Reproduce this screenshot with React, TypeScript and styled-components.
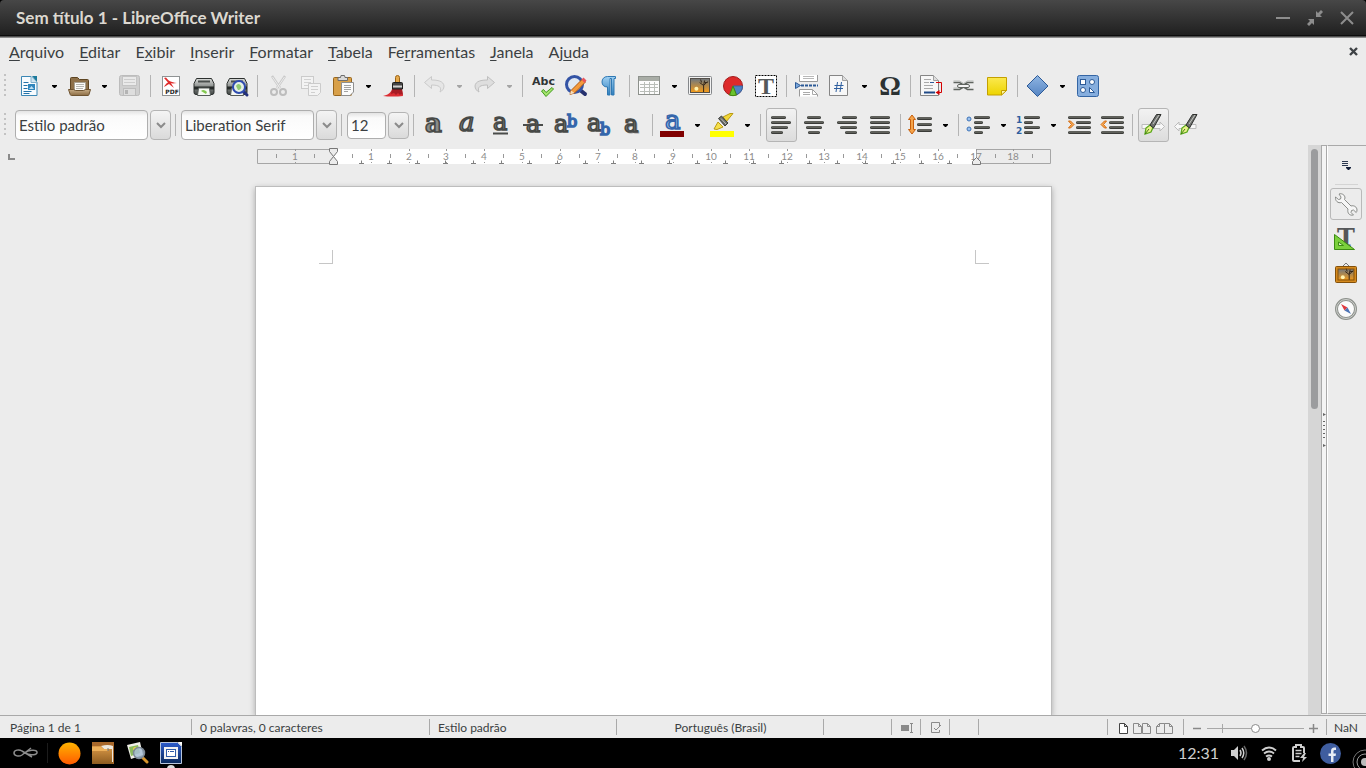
import React from "react";
import styled, { createGlobalStyle, css } from "styled-components";

const GlobalStyle = createGlobalStyle`
  *, *::before, *::after { box-sizing: border-box; }
  html, body { margin: 0; padding: 0; background: #000; }
  body { font-family: Lato, "Liberation Sans", sans-serif; color: #3b3f42; }
  button, input { font: inherit; color: inherit; margin: 0; padding: 0; border: 0; background: none; }
`;

const line = "#a9a9a9";

const Shell = styled.div`
  display: flex;
  flex-direction: column;
  height: 100vh;
  overflow: hidden;
  background: #ececec;
`;

/* ---------- window frame ---------- */

const TitleBackdrop = styled.div`
  background: #000;
`;

const TitleBar = styled.header`
  display: flex;
  align-items: center;
  justify-content: space-between;
  height: 38px;
  padding: 0 11px 2px 16px;
  border-radius: 4px 4px 0 0;
  background: linear-gradient(#474747, #202020 35px, #0c0c0c 35px, #0c0c0c 36px, #8f8f8f 37px);
`;

const Title = styled.h1`
  margin: 0;
  font-size: 17px;
  line-height: 20px;
  font-weight: 700;
  color: #dcd8d0;
`;

const WindowButtons = styled.div`
  display: flex;
  gap: 16px;
`;

const WindowButton = styled.button`
  width: 16px;
  height: 16px;
  color: #8d8d8d;
  svg { display: block; }
`;

const MenuBar = styled.nav`
  display: flex;
  align-items: center;
  gap: 15px;
  height: 29px;
  padding: 0 8px 2px 9px;
  font-size: 16px;
  line-height: 20px;
`;

const MenuLink = styled.a`
  color: inherit;
  text-decoration: none;
  u { text-decoration-thickness: 1px; text-underline-offset: 2px; }
`;

const CloseDocument = styled.button`
  width: 9px;
  height: 9px;
  margin-left: auto;
  svg { display: block; }
`;

/* ---------- toolbars ---------- */

const Toolbar = styled.div<{ $tall?: boolean }>`
  display: flex;
  align-items: center;
  height: ${(p) => (p.$tall ? 40 : 38)}px;
`;

const Grip = styled.span<{ $wide?: boolean }>`
  width: 2px;
  height: 24px;
  margin: 0 ${(p) => (p.$wide ? 9 : 7)}px 0 4px;
  background: repeating-linear-gradient(#c2c2c2 0 2px, transparent 2px 5px);
`;

const ToolButton = styled.button<{ $pressed?: boolean }>`
  flex: none;
  width: 33px;
  height: 34px;
  padding: 0 4px 0 5px;
  svg { display: block; overflow: visible; }
  ${(p) =>
    p.$pressed &&
    css`
      width: 31px;
      margin-left: 2px;
      padding: 0 3px 0 2px;
      border: 1px solid #b5b5b5;
      border-radius: 3px;
      background: linear-gradient(#f2f2f2, #dcdcdc);
    `}
`;

const ArrowButton = styled.button`
  flex: none;
  width: 17px;
  height: 34px;
  padding: 0 6px;
  svg { display: block; }
`;

const Separator = styled.span`
  flex: none;
  width: 1px;
  height: 22px;
  margin: 0 3px 0 4px;
  background: #b4b4b4;
`;

const ComboSeparator = styled(Separator)`
  margin-right: 5px;
`;

const Combo = styled.div`
  display: flex;
  align-items: center;
  gap: 2px;
`;

const ComboInput = styled.input<{ $small?: boolean }>`
  width: ${(p) => (p.$small ? 39 : 133)}px;
  height: ${(p) => (p.$small ? 27 : 30)}px;
  padding: 0 3px;
  border: 1px solid #aeaeae;
  border-radius: 4px;
  background: linear-gradient(#e4e4e4, #fafafa 5px, #fff);
  font-size: 15px;
  line-height: 20px;
`;

const ComboButton = styled.button<{ $small?: boolean }>`
  display: flex;
  align-items: center;
  justify-content: center;
  width: 21px;
  height: ${(p) => (p.$small ? 27 : 30)}px;
  border: 1px solid #b4b4b4;
  border-radius: 4px;
  background: linear-gradient(#f4f4f4, #dadada);
`;

/* ---------- document area ---------- */

const Workspace = styled.div`
  display: flex;
  flex: 1;
  min-height: 0;
`;

const DocumentArea = styled.main`
  display: flex;
  flex: 1;
  flex-direction: column;
  align-items: center;
  min-width: 0;
  overflow: hidden;
`;

const RulerRow = styled.div`
  display: grid;
  grid-template-columns: 1fr 794px 1fr;
  width: 100%;
  padding-top: 3px;
  svg { display: block; overflow: visible; }
`;

const TabSelector = styled.button`
  width: 7px;
  height: 6px;
  margin: 6px 0 0 8px;
  border-left: 2px solid #8a8a8a;
  border-bottom: 2px solid #8a8a8a;
`;

const Page = styled.article`
  display: flex;
  flex: 1;
  justify-content: space-between;
  align-items: flex-start;
  width: 797px;
  margin: 21px 1px 0 0;
  padding: 63px 62px 0 63px;
  border: 1px solid #bdbdbd;
  border-bottom: 0;
  background: #fff;
  box-shadow: 0 2px 6px rgba(0, 0, 0, 0.28);
`;

const MarginCorner = styled.span<{ $side: "left" | "right" }>`
  width: 14px;
  height: 14px;
  border-bottom: 1px solid #c6c6c6;
  border-${(p) => (p.$side === "left" ? "right" : "left")}: 1px solid #c6c6c6;
`;

const ScrollTrack = styled.div`
  width: 13px;
  padding: 4px 3px 0;
  background: #d6d6d6;
`;

const ScrollThumb = styled.div`
  width: 7px;
  height: 46%;
  border-radius: 4px;
  background: #9b9c9e;
`;

const Splitter = styled.div`
  display: flex;
  align-items: center;
  justify-content: center;
  width: 6px;
  margin-bottom: 1px;
  border: 1px solid ${line};
  background: #f4f4f4;
`;

const Sidebar = styled.aside`
  display: flex;
  flex-direction: column;
  align-items: center;
  gap: 3px;
  width: 39px;
  margin-bottom: 1px;
  padding: 11px 2px 0 0;
  border-top: 1px solid ${line};
  border-bottom: 1px solid ${line};
  border-left: 1px solid #fff;
`;

const SidebarMenu = styled.button`
  width: 16px;
  height: 16px;
  svg { display: block; }
`;

const SidebarRule = styled.span`
  width: 23px;
  height: 1px;
  margin-top: 8px;
  background: #d4d4d4;
`;

const SidebarButton = styled.button<{ $pressed?: boolean }>`
  display: flex;
  align-items: center;
  justify-content: center;
  width: 32px;
  height: 32px;
  border: 1px solid ${(p) => (p.$pressed ? "#b9b9b9" : "transparent")};
  border-radius: 3px;
  svg { overflow: visible; }
`;

/* ---------- status bar ---------- */

const StatusBar = styled.footer`
  display: grid;
  grid-template-columns: 192px 238px 187px 207px 68px 29px 29px 29px 1fr 76px 143px 39px;
  height: 23px;
  border-top: 1px solid ${line};
  font-size: 12px;
  line-height: 20px;
`;

const StatusCell = styled.div<{ $center?: boolean; $last?: boolean }>`
  display: flex;
  align-items: center;
  justify-content: ${(p) => (p.$center ? "center" : "flex-start")};
  gap: 5px;
  padding: 2px 0 0 ${(p) => (p.$center ? 0 : p.$last ? 7 : 8)}px;
  white-space: nowrap;
  background: ${(p) => (p.$last ? "none" : `linear-gradient(${line}, ${line}) right 3px / 1px 16px no-repeat`)};
  svg { display: block; }
`;

const FirstStatusCell = styled(StatusCell)`
  padding-left: 10px;
`;

const IconButton = styled.button`
  svg { display: block; }
`;

const ZoomSlider = styled.input`
  appearance: none;
  width: 97px;
  height: 9px;
  background:
    linear-gradient(#a8a8a8, #a8a8a8) 15px 0 / 1px 9px no-repeat,
    linear-gradient(#a8a8a8, #a8a8a8) 0 4px / 100% 1px no-repeat;
  &::-webkit-slider-thumb {
    appearance: none;
    width: 9px;
    height: 9px;
    border: 1px solid #8a8a8a;
    border-radius: 50%;
    background: #fff;
  }
`;

/* ---------- desktop panel ---------- */

const Taskbar = styled.footer`
  display: flex;
  align-items: center;
  height: 30px;
  padding: 0 0 0 13px;
  overflow: hidden;
  background: #000;
  color: #cfcfcf;
  svg { display: block; overflow: visible; }
`;

const Launchers = styled.div`
  display: flex;
  align-items: center;
  gap: 10px;
`;

const PanelRule = styled.span`
  width: 1px;
  height: 20px;
  background: #1c1c1c;
`;

const Tray = styled.div`
  display: flex;
  align-items: center;
  gap: 12px;
  margin-left: auto;
`;

const Clock = styled.time`
  font-size: 16px;
  line-height: 20px;
`;

/* ---------- icons ---------- */

type Kids = { children: React.ReactNode };
const I24 = ({ children }: Kids) => (
  <svg width="24" height="24" viewBox="0 0 24 24" aria-hidden="true">
    {children}
  </svg>
);

const Grad = ({ id, a, b }: { id: string; a: string; b: string }) => (
  <linearGradient id={id} x1="0" y1="0" x2="0" y2="1">
    <stop offset="0" stopColor={a} />
    <stop offset="1" stopColor={b} />
  </linearGradient>
);

const NewIcon = () => (
  <I24>
    <path d="M3.5 2.5H13l6 6V21.5H3.5z" fill="#f7fbfe" stroke="#3b87b5" />
    <path d="M14 2h5v6z" fill="#1c7a9c" />
    <path d="M13 2.5V8.5H19" fill="#cfe5f2" stroke="#7fb0cc" />
    <path d="M5.5 8.5h5M5.5 11.5h4M5.5 14.5h4M5.5 17.5h8M5.5 19.5h6" stroke="#2372a8" />
    <path d="M10 10h7v6h-7z" fill="#2f86bd" />
    <path d="M11 15l2.500-3 2.500 3z" fill="#bfe0f2" />
  </I24>
);

const OpenIcon = () => (
  <I24>
    <defs><Grad id="openFront" a="#c8ad87" b="#8a6b43" /></defs>
    <path d="M2.5 17V4.5q0-1 1-1h6l2 2h8q1 0 1 1V17z" fill="#8d7049" stroke="#5d4523" />
    <path d="M6.500 8.500h11V17h-11z" fill="#fbfbf8" stroke="#a8a294" />
    <path d="M8 10.500h8M8 12.500h8M8 14.500h7" stroke="#b5b5b0" />
    <path d="M.5 15.500h5l2 1h8l2-1h5L21 20.500q-.3 1-1 1H3.500q-1 0-1.300-1z" fill="url(#openFront)" stroke="#6e5330" />
  </I24>
);

const SaveIcon = () => (
  <I24>
    <rect x="1.500" y="1.500" width="20" height="20" rx="2" fill="#cfcfcf" stroke="#bcbcbc" />
    <rect x="4.500" y="2.500" width="14" height="9" fill="#e9e9e9" stroke="#c4c4c4" />
    <path d="M6 5.500h11M6 8.500h11" stroke="#cdcdcd" />
    <rect x="5.500" y="14.500" width="12" height="7" fill="#dedede" stroke="#bdbdbd" />
    <rect x="7" y="16" width="3" height="4" fill="#b4b4b4" />
  </I24>
);

const PdfIcon = () => (
  <I24>
    <rect x="3.500" y="2.500" width="17" height="19" fill="#fff" stroke="#8f9394" />
    <path d="M5 4l2-.5c2 3 5 5 11 5.500-3 .6-5 .5-6 .3L15 14l-5-4c-2 1-3 2-5 3 1-2 2-3.500 4-4.500z" fill="#e02b2b" />
    <text x="13" y="20" textAnchor="middle" fontFamily="DejaVu Sans, sans-serif" fontWeight="700" fontSize="6" fill="#222">PDF</text>
  </I24>
);

const printerBody = (id: string) => (
  <>
    <defs><Grad id={id} a="#dadcda" b="#3f4442" /></defs>
    <path d="M4.500 4.500h15l2.500 5v9q0 2-2 2H4q-2 0-2-2v-9z" fill={`url(#${id})`} stroke="#2c302f" />
    <path d="M6 7.500h12" stroke="#4a4f4d" strokeWidth="2" />
    <path d="M2 12.500h20v3H2z" fill="#262a29" />
    <path d="M6.500 14h11l1 7.500h-13z" fill="#f6f9f4" stroke="#555a58" />
    <path d="M9 17c2-2 4-1 6 1l-1 2z" fill="#83c84f" />
  </>
);

const PrinterIcon = () => <I24>{printerBody("prA")}</I24>;

const PreviewIcon = () => (
  <I24>
    {printerBody("prB")}
    <path d="M18 17l4 4" stroke="#23307c" strokeWidth="3" strokeLinecap="round" />
    <circle cx="14" cy="13" r="6" fill="#e4efe6" stroke="#2f4bb0" strokeWidth="2" />
    <path d="M11 12c2-3 4-2 5 0s-1 4-3 4z" fill="#92cb72" />
  </I24>
);

const CutIcon = () => (
  <I24>
    <path d="M6 2l8 12M19 2l-8 12" stroke="#c9c9c9" strokeWidth="2.400" />
    <path d="M6.500 3l7.500 11M18.500 3L11 14" stroke="#ececec" />
    <circle cx="8" cy="18" r="3" fill="none" stroke="#bdbdbd" strokeWidth="2" />
    <circle cx="17" cy="18" r="3" fill="none" stroke="#bdbdbd" strokeWidth="2" />
  </I24>
);

const CopyIcon = () => (
  <I24>
    <rect x="2.500" y="2.500" width="12" height="12" fill="#f3f3f3" stroke="#cbcbcb" />
    <path d="M5 5.500h7M5 8.500h7M5 11.500h4" stroke="#d2d2d2" />
    <path d="M9.500 9.500h12v9l-3 3h-9z" fill="#f3f3f3" stroke="#cbcbcb" />
    <path d="M12 12.500h7M12 15.500h7M12 18.500h4" stroke="#cfcfcf" />
  </I24>
);

const PasteIcon = () => (
  <I24>
    <rect x="1.500" y="3.500" width="18" height="18" rx="1" fill="#d8a049" stroke="#97651d" />
    <path d="M6 6.500V3.500h2.500L9 1.500h3.500l.5 2h2.500v3z" fill="#d9d9d9" stroke="#6d6d6d" />
    <path d="M9.500 8.500h12V18l-3.500 3.500H9.500z" fill="#fbfbfb" stroke="#8e8e8e" />
    <path d="M12 11.500h7M12 13.500h7M12 15.500h7M12 17.500h4" stroke="#a2a2a2" />
  </I24>
);

const BrushIcon = () => (
  <I24>
    <path d="M1 22c5-1 7-3 9-6h10l1 6c-5 .5-13 1-20 0z" fill="#dc2d33" />
    <path d="M10 15h10l1 6-2-1-1 1-2-2-2 2-2-2-3 1z" fill="#a81c24" />
    <rect x="13.500" y="1.500" width="4" height="9" rx="2" fill="#e6a94b" stroke="#9c6416" />
    <path d="M10.500 9.500q0-1 1-1h8q1 0 1 1V15h-10z" fill="#444" stroke="#1e1e1e" />
    <path d="M11 12.500h9" stroke="#d0d0d0" strokeWidth="2" />
  </I24>
);

const curvedArrow = "M1.500 8.500L8.500 2.500v3.500c6 0 12 1 12.500 6 0 3-2 5-4 6 2-5-1-7-8.500-7v3.500z";
const UndoIcon = () => (
  <I24><path d={curvedArrow} fill="#e6e6e6" stroke="#cacaca" /></I24>
);
const RedoIcon = () => (
  <I24><g transform="matrix(-1 0 0 1 23 0)"><path d={curvedArrow} fill="#dedede" stroke="#bfbfbf" /></g></I24>
);

const SpellIcon = () => (
  <I24>
    <text x="1" y="11" fontFamily="DejaVu Sans, sans-serif" fontWeight="700" fontSize="11" fill="#303436">Abc</text>
    <path d="M10.500 17l2-1.500 2.500 3 6-5 1.500 1.500-7.500 7.500z" fill="#a5e46c" stroke="#3f9a1d" />
  </I24>
);

const FindIcon = () => (
  <I24>
    <path d="M16 16l5 4" stroke="#26316e" strokeWidth="4" strokeLinecap="round" />
    <circle cx="10.500" cy="10.500" r="8" fill="#dfe7f2" stroke="#3353a5" strokeWidth="3" />
    <path d="M6 20.500l1-4L18.500 5l3 3L10.500 19z" fill="#f39a3c" stroke="#b25a14" />
    <path d="M17.500 5.500l2-2 3 3-2 2.500z" fill="#e8545a" />
    <path d="M6 20.500l1-4 3.500 2.500z" fill="#f4dfc0" />
  </I24>
);

const PilcrowIcon = () => (
  <I24>
    <defs><Grad id="pil" a="#9fd0f3" b="#2e7fbd" /></defs>
    <path d="M10.500 2.500h8v2h-1.500v16.500h-2.500V4.500h-1.500V21H10.500v-8C7 13 5 11 5 8s2-5.500 5.500-5.500z" fill="url(#pil)" stroke="#2f78b3" />
  </I24>
);

const TableIcon = () => (
  <I24>
    <rect x=".5" y="2.500" width="21" height="18" fill="#fcfcfc" stroke="#8d918c" />
    <rect x="1" y="3" width="20" height="4" fill="#a9ada6" />
    <path d="M2 10.500h18M2 13.500h18M2 17.500h18M6.500 8v12M11.500 8v12M16.500 8v12" stroke="#b9bdb8" />
  </I24>
);

const Sunset = ({ id, x, y, w, h }: { id: string; x: number; y: number; w: number; h: number }) => (
  <>
    <defs><Grad id={id} a="#72787c" b="#f09a1d" /></defs>
    <rect x={x} y={y} width={w} height={h} fill={`url(#${id})`} />
    <circle cx={x + w * 0.3} cy={y + h * 0.75} r="2" fill="#fff2b0" />
    <path
      d={`M${x + w * 0.7} ${y + h}v-${h * 0.5}l-4-3m4 3l1-5m-1 5l4-4m-6 1l-1-3m7 3h-3`}
      fill="none"
      stroke="#33261a"
    />
  </>
);

const ImageIcon = () => (
  <I24>
    <rect x=".5" y="2.500" width="23" height="18" rx="1" fill="#f2f2f2" stroke="#84878a" />
    <Sunset id="sunA" x={3} y={5} w={18} h={13} />
    <rect x="2.500" y="4.500" width="19" height="14" fill="none" stroke="#55504a" />
  </I24>
);

const ChartIcon = () => (
  <I24>
    <circle cx="12" cy="12" r="9.500" fill="#dd2a2a" stroke="#a31b1b" />
    <path d="M12 12h9.500a9.500 9.500 0 0 1-6 8.800z" fill="#5083c4" stroke="#3465a4" />
    <path d="M12 12l3.500 9a9.500 9.500 0 0 1-7 0z" fill="#6bc22d" stroke="#3f8a12" />
  </I24>
);

const TextBoxIcon = () => (
  <I24>
    <rect x="1.500" y="1.500" width="21" height="21" fill="#fff" stroke="#000" strokeDasharray="2 1" />
    <text x="12" y="20" textAnchor="middle" fontFamily="Liberation Serif, serif" fontWeight="700" fontSize="24" fill="#55595a">T</text>
  </I24>
);

const PageBreakIcon = () => (
  <I24>
    <path d="M4.500 1v6.500h18V1" fill="#fff" stroke="#999" />
    <path d="M8 2.500h11M8 4.500h11" stroke="#b8b8b8" />
    <path d="M4.500 22.500v-7h13l5 5v2" fill="#fff" stroke="#999" />
    <path d="M17.500 15.500v5h5M8 18.500h7M8 20.500h7" fill="none" stroke="#aaa" />
    <path d="M.5 8.500v6l5-3z" fill="#7ba7da" stroke="#2c5a97" />
    <path d="M6 11.500h17" stroke="#2c5a97" strokeWidth="2" strokeDasharray="3 1" />
  </I24>
);

const FieldIcon = () => (
  <I24>
    <path d="M1.500 1.500h13l5 5v15h-18z" fill="#f7f7f7" stroke="#858585" />
    <path d="M14.500 1.500v5h5" fill="#ddd" stroke="#a0a0a0" />
    <path d="M9.500 8L8 18M13.500 8L12 18M6.500 11.500h9M6 14.500h9" stroke="#2f5f9f" />
  </I24>
);

const OmegaIcon = () => (
  <I24>
    <text x="12" y="21" textAnchor="middle" fontFamily="Liberation Serif, serif" fontWeight="700" fontSize="27" fill="#2b3233">Ω</text>
  </I24>
);

const FootnoteIcon = () => (
  <I24>
    <path d="M1.500 1.500h13l5 5v15h-18z" fill="#f7f7f7" stroke="#858585" />
    <path d="M14.500 1.500v5h5" fill="#ddd" stroke="#a0a0a0" />
    <path d="M5 5.500h7M5 8.500h5M5 11.500h9M5 14.500h9" stroke="#aaa" />
    <path d="M11 8.500h4" stroke="#2c5a97" />
    <path d="M5 18.500h11" stroke="#204a87" strokeWidth="2" />
    <path d="M17 8.500h5.500v10h-4" fill="none" stroke="#d40000" />
    <path d="M20.500 16v5l-4-2.500z" fill="#d40000" />
  </I24>
);

const LinkIcon = () => (
  <I24>
    <path d="M1.500 8.500h6l4 2.500 4-2.500h6M1.500 15.500h6l4-2.500 4 2.500h6" fill="none" stroke="#5f645f" strokeWidth="1.500" />
    <path d="M1.500 7h6l4 2.500 4-2.500h6M1.500 14h6" fill="none" stroke="#b5b8b5" />
    <rect x="5.500" y="10.500" width="12" height="3" rx="1.500" fill="#f4f4f4" stroke="#5f645f" />
  </I24>
);

const NoteIcon = () => (
  <I24>
    <defs><Grad id="note" a="#fbe94f" b="#edd400" /></defs>
    <path d="M2.500 3.500h19v13l-5 4.500h-14z" fill="url(#note)" stroke="#c4a000" />
    <path d="M16.500 21v-4.500h5z" fill="#fdf6a5" stroke="#c4a000" />
  </I24>
);

const DiamondIcon = () => (
  <I24>
    <defs><Grad id="dia" a="#8fb5e2" b="#5584c2" /></defs>
    <path d="M11.500 1.500l10.500 10.500-10.500 10.500L1 12z" fill="url(#dia)" stroke="#2c5a97" />
  </I24>
);

const ShapesIcon = () => (
  <I24>
    <rect x="1.500" y="1.500" width="21" height="21" rx="2" fill="#86aede" stroke="#3465a4" />
    <g fill="#fff" stroke="#2c5a97">
      <rect x="4.500" y="5.500" width="5" height="5" />
      <circle cx="16" cy="8" r="2.500" />
      <circle cx="7" cy="16" r="2.500" />
      <path d="M13.500 13.500v5h5z" />
    </g>
  </I24>
);

const serifGlyph = { fontFamily: "DejaVu Serif, serif", fontWeight: 400, strokeWidth: 1.6 } as const;
const darkGlyph = { ...serifGlyph, fill: "#8a8c89", stroke: "#474947" } as const;
const blueGlyph = { ...serifGlyph, fill: "#a9c8ee", stroke: "#3566ab" } as const;

const BoldIcon = () => (
  <I24><text x="3" y="19" fontSize="26" {...darkGlyph} fontWeight={700}>a</text></I24>
);
const ItalicIcon = () => (
  <I24><text x="4" y="18" fontSize="26" fontStyle="italic" {...darkGlyph}>a</text></I24>
);
const UnderlineIcon = () => (
  <I24>
    <text x="5" y="17" fontSize="24" {...darkGlyph}>a</text>
    <path d="M5 20.500h15" stroke="#4a4c4a" strokeWidth="2" />
  </I24>
);
const StrikeIcon = () => (
  <I24>
    <text x="5" y="19" fontSize="24" {...darkGlyph}>a</text>
    <path d="M2 12h20" stroke="#4a4c4a" strokeWidth="2" />
  </I24>
);
const SuperIcon = () => (
  <I24>
    <text x="0" y="19" fontSize="24" {...darkGlyph}>a</text>
    <text x="13" y="14" fontSize="16" {...blueGlyph}>b</text>
  </I24>
);
const SubIcon = () => (
  <I24>
    <text x="0" y="18" fontSize="24" {...darkGlyph}>a</text>
    <text x="13" y="22" fontSize="16" {...blueGlyph}>b</text>
  </I24>
);
const ShadowIcon = () => (
  <I24>
    <text x="5" y="20" fontSize="24" fontFamily="DejaVu Serif, serif" fill="#a8a8a8" stroke="#a8a8a8">a</text>
    <text x="4" y="19" fontSize="24" {...darkGlyph}>a</text>
  </I24>
);
const FontColorIcon = () => (
  <I24>
    <text x="4" y="16" fontSize="26" {...blueGlyph}>a</text>
    <rect x="-1" y="18" width="24" height="6" fill="#800000" />
  </I24>
);
const HighlightIcon = () => (
  <I24>
    <path d="M3 16l4-7 5 5-6 2.500z" fill="#f6e04b" stroke="#b99a12" />
    <path d="M12 4l7-3.500h3L15 9z" fill="#f1d636" stroke="#b99a12" />
    <path d="M7.500 5.500l3-2.500 6.500 7-3 3z" fill="#6b6d69" stroke="#3c3d3b" />
    <path d="M10 5.500l5 5.500" stroke="#bcbeba" />
    <rect x="-1" y="18" width="24" height="6" fill="#ffff00" />
  </I24>
);

/* A text line with a lit upper edge, as used by all paragraph icons. */
const Bar = ({ x, y, w }: { x: number; y: number; w: number }) => (
  <>
    <rect x={x} y={y} width={w} height="3" rx="1.500" fill="#3a3b38" />
    <path d={`M${x + 1} ${y + 1}h${w - 2}`} stroke="#85877f" />
  </>
);

const Lines = ({ rows }: { rows: [number, number, number][] }) => (
  <>{rows.map(([x, y, w]) => <Bar key={y} x={x} y={y} w={w} />)}</>
);

const AlignIcon = ({ rows }: { rows: [number, number][] }) => (
  <I24><Lines rows={rows.map(([x, w], i) => [x, 3 + i * 5, w] as [number, number, number])} /></I24>
);

const SpacingIcon = () => (
  <I24>
    <path d="M3 2L6.500 6.500H4.500V16.500h2L3 21-.5 16.500h2V6.500h-2z" fill="#f6a54b" stroke="#c75f0c" />
    <Lines rows={[[8, 4, 15], [8, 10, 15], [8, 16, 15]]} />
  </I24>
);

const listRows: [number, number, number][] = [[7, 3, 16], [7, 8, 9], [7, 13, 16], [7, 18, 9]];
const BulletsIcon = () => (
  <I24>
    <circle cx="2" cy="6" r="2" fill="#9cc1ec" stroke="#3f74b8" />
    <circle cx="2" cy="16" r="2" fill="#9cc1ec" stroke="#3f74b8" />
    <Lines rows={listRows} />
  </I24>
);
const NumberingIcon = () => (
  <I24>
    <g fontFamily="DejaVu Sans, sans-serif" fontWeight="700" fontSize="9" fill="#2f5f9f">
      <text x="-1" y="10">1</text>
      <text x="-1" y="21">2</text>
    </g>
    <Lines rows={listRows} />
  </I24>
);
const IndentIcon = ({ out }: { out?: boolean }) => (
  <I24>
    <Lines rows={[[1, 3, 23], [9, 8, 15], [9, 13, 15], [1, 18, 23]]} />
    <path
      d={out ? "M6.500 8L3.500 11.500 6.500 15H4.500L1 11.500 4.500 8z" : "M1.500 8L4.500 11.500 1.500 15H3.500L7 11.500 3.500 8z"}
      fill="#fbb05a"
      stroke="#d2690f"
    />
  </I24>
);

const PenIcon = ({ back }: { back?: boolean }) => (
  <I24>
    <path
      d={back ? "M.5 13.500L5 9v2.500h17v4H5V18z" : "M23.500 13.500L19 9v2.500H1v4h18V18z"}
      fill="#f8f8f8"
      stroke="#bcbcbc"
    />
    <g transform={back ? "translate(3 0)" : undefined}>
      <path d="M4 21l1-6 4-3 3 2.500-2 4.500z" fill="#e9f08a" stroke="#5aa81a" strokeWidth="1.300" />
      <path d="M4 21l4-5" stroke="#3f7a12" />
      <path d="M9 12l6.500-10.500h4.500L12.500 15z" fill="#6f716e" stroke="#2e302e" />
      <path d="M12 11l6-9" stroke="#c4c6c3" />
    </g>
  </I24>
);

/* ---------- sidebar icons ---------- */

const WrenchIcon = () => (
  <I24>
    <path
      d="M5 2c3-1 6 1 6 4l-.5 1.500 6.500 6.500c3-1 6 1 6 4 0 1-.3 2-.8 2.500L19.500 18l-2 .5-.5 2 2.500 2.500c-4 1-6.500-2-5.500-6L7.500 10.500C4 11.500 1 9 1.500 5l3 2.500 2-.5.5-2z"
      fill="#f6f6f6"
      stroke="#8b8d8a"
    />
  </I24>
);
const StylesIcon = () => (
  <I24>
    <text x="12" y="19" textAnchor="middle" fontFamily="DejaVu Serif, serif" fontWeight="700" fontSize="24" fill="#555759">T</text>
    <path d="M.5 7.500v15h20z" fill="#7bd03c" stroke="#3c8c12" />
    <path d="M4.500 15v3.500h5z" fill="#d9f3c3" stroke="#3c8c12" />
  </I24>
);
const GalleryIcon = () => (
  <I24>
    <path d="M8 5l4-4 4 4" fill="none" stroke="#777" />
    <rect x="1.500" y="4.500" width="21" height="16" rx="1" fill="#d58a1e" stroke="#83500a" />
    <Sunset id="sunB" x={4} y={7} w={16} h={11} />
    <rect x="4" y="7" width="16" height="11" fill="none" stroke="#83500a" />
  </I24>
);
const CompassIcon = () => (
  <I24>
    <circle cx="12" cy="12" r="9.500" fill="#fbfbfb" stroke="#8d918c" strokeWidth="3" />
    <circle cx="12" cy="12" r="9.500" fill="none" stroke="#cfd1ce" />
    <path d="M7 7l6.500 3.500-3 3z" fill="#e0393e" />
    <path d="M17 17l-3.500-6.500-3 3z" fill="#4d74b5" />
  </I24>
);

/* ---------- small pieces ---------- */

const Arrow = ({ label, dim }: { label: string; dim?: boolean }) => (
  <ArrowButton aria-label={label}>
    <svg width="5" height="3" viewBox="0 0 5 3" aria-hidden="true">
      <path d="M0 0h5v1L3 3H2L0 1z" fill={dim ? "#a5a5a5" : "#000"} />
    </svg>
  </ArrowButton>
);

const Chevron = () => (
  <svg width="10" height="7" viewBox="0 0 10 7" aria-hidden="true">
    <path d="M1 1l4 4 4-4" fill="none" stroke="#8b8b8b" strokeWidth="2" />
  </svg>
);

type Tool = { label: string; icon: React.ReactNode; arrow?: boolean; dim?: boolean; pressed?: boolean };

const Tools = ({ groups }: { groups: Tool[][] }) => (
  <>
    {groups.map((group, i) => (
      <React.Fragment key={i}>
        {i > 0 && <Separator />}
        {group.map((t) => (
          <React.Fragment key={t.label}>
            <ToolButton aria-label={t.label} $pressed={t.pressed}>{t.icon}</ToolButton>
            {t.arrow && <Arrow label={`${t.label}: opções`} dim={t.dim} />}
          </React.Fragment>
        ))}
      </React.Fragment>
    ))}
  </>
);

const standardTools: Tool[][] = [
  [
    { label: "Novo", icon: <NewIcon />, arrow: true },
    { label: "Abrir", icon: <OpenIcon />, arrow: true },
    { label: "Salvar", icon: <SaveIcon /> },
  ],
  [
    { label: "Exportar como PDF", icon: <PdfIcon /> },
    { label: "Imprimir", icon: <PrinterIcon /> },
    { label: "Visualizar impressão", icon: <PreviewIcon /> },
  ],
  [
    { label: "Cortar", icon: <CutIcon /> },
    { label: "Copiar", icon: <CopyIcon /> },
    { label: "Colar", icon: <PasteIcon />, arrow: true },
    { label: "Clonar formatação", icon: <BrushIcon /> },
  ],
  [
    { label: "Desfazer", icon: <UndoIcon />, arrow: true, dim: true },
    { label: "Refazer", icon: <RedoIcon />, arrow: true, dim: true },
  ],
  [
    { label: "Ortografia", icon: <SpellIcon /> },
    { label: "Localizar e substituir", icon: <FindIcon /> },
    { label: "Marcas de formatação", icon: <PilcrowIcon /> },
  ],
  [
    { label: "Tabela", icon: <TableIcon />, arrow: true },
    { label: "Figura", icon: <ImageIcon /> },
    { label: "Gráfico", icon: <ChartIcon /> },
    { label: "Caixa de texto", icon: <TextBoxIcon /> },
  ],
  [
    { label: "Quebra de página", icon: <PageBreakIcon /> },
    { label: "Campo", icon: <FieldIcon />, arrow: true },
    { label: "Caractere especial", icon: <OmegaIcon /> },
  ],
  [
    { label: "Nota de rodapé", icon: <FootnoteIcon /> },
    { label: "Hiperlink", icon: <LinkIcon /> },
    { label: "Anotação", icon: <NoteIcon /> },
  ],
  [
    { label: "Formas", icon: <DiamondIcon />, arrow: true },
    { label: "Funções de desenho", icon: <ShapesIcon /> },
  ],
];

const formattingTools: Tool[][] = [
  [
    { label: "Negrito", icon: <BoldIcon /> },
    { label: "Itálico", icon: <ItalicIcon /> },
    { label: "Sublinhado", icon: <UnderlineIcon /> },
    { label: "Tachado", icon: <StrikeIcon /> },
    { label: "Sobrescrito", icon: <SuperIcon /> },
    { label: "Subscrito", icon: <SubIcon /> },
    { label: "Sombra", icon: <ShadowIcon /> },
  ],
  [
    { label: "Cor da fonte", icon: <FontColorIcon />, arrow: true },
    { label: "Realce", icon: <HighlightIcon />, arrow: true },
  ],
  [
    { label: "Alinhar à esquerda", icon: <AlignIcon rows={[[2, 15], [2, 20], [2, 17], [2, 12]]} />, pressed: true },
    { label: "Centralizar", icon: <AlignIcon rows={[[5, 14], [2, 20], [4, 16], [6, 12]]} /> },
    { label: "Alinhar à direita", icon: <AlignIcon rows={[[7, 15], [2, 20], [5, 17], [10, 12]]} /> },
    { label: "Justificar", icon: <AlignIcon rows={[[2, 20], [2, 20], [2, 20], [2, 20]]} /> },
  ],
  [{ label: "Entrelinhas", icon: <SpacingIcon />, arrow: true }],
  [
    { label: "Marcadores", icon: <BulletsIcon />, arrow: true },
    { label: "Numeração", icon: <NumberingIcon />, arrow: true },
    { label: "Aumentar recuo", icon: <IndentIcon /> },
    { label: "Diminuir recuo", icon: <IndentIcon out /> },
  ],
  [
    { label: "Da esquerda para a direita", icon: <PenIcon />, pressed: true },
    { label: "Da direita para a esquerda", icon: <PenIcon back /> },
  ],
];

/* Each entry is split around its keyboard mnemonic. */
const menus: [string, string, string][] = [
  ["", "A", "rquivo"],
  ["", "E", "ditar"],
  ["E", "x", "ibir"],
  ["", "I", "nserir"],
  ["", "F", "ormatar"],
  ["", "T", "abela"],
  ["Fe", "r", "ramentas"],
  ["", "J", "anela"],
  ["Aj", "u", "da"],
];

const CM = 37.8;
const ZERO = 76;

const Ruler = () => {
  const cms = [-1, ...Array.from({ length: 18 }, (_, i) => i + 1)];
  const halves = [-1.5, -0.5, ...Array.from({ length: 19 }, (_, i) => i + 0.5)];
  const px = (cm: number) => Math.round(ZERO + cm * CM);
  return (
    <svg width="794" height="17" viewBox="0 0 794 17" role="img" aria-label="Régua">
      <rect x="76" y="1" width="643" height="15" fill="#fff" />
      <path d="M76.500 1.500H.5v14h76M719.500 15.500h74v-14h-74v14" fill="none" stroke="#a6a6a6" />
      {halves.map((h) => (
        <rect key={h} x={px(h)} y="6" width="1" height="4" fill="#999" />
      ))}
      {cms.map((c) => (
        <g key={c}>
          <rect x={px(c)} y="1" width="1" height="2" fill="#999" />
          <rect x={px(c)} y="14" width="1" height="1" fill="#999" />
          <text x={px(c)} y="12" textAnchor="middle" fontSize="10" fill="#8c8c8c">{Math.abs(c)}</text>
        </g>
      ))}
      {Array.from({ length: 22 }, (_, i) => (
        <path key={i} d={`M${ZERO + 26 + i * 28} 15.500h5m-2.500 0v-3`} stroke="#808080" />
      ))}
      <path d="M72.500.5h8v3l-4 5 4 5v3h-8v-3l4-5-4-5z" fill="#ececec" stroke="#777" />
      <path d="M715.500 16.500v-3l4-4 4 4v3z" fill="#ececec" stroke="#777" />
    </svg>
  );
};

const docPath = "M.5.500h5l3 3v7h-8zM5.500.500v3h3";

export default function App() {
  return (
    <Shell>
      <GlobalStyle />
      <TitleBackdrop>
        <TitleBar>
          <Title>Sem título 1 - LibreOffice Writer</Title>
          <WindowButtons>
            <WindowButton aria-label="Minimizar">
              <svg width="16" height="16" viewBox="0 0 16 16"><path d="M1 8h14" stroke="currentColor" strokeWidth="2" /></svg>
            </WindowButton>
            <WindowButton aria-label="Restaurar">
              <svg width="16" height="16" viewBox="0 0 16 16" fill="currentColor">
                <path d="M9 1v6h6l-2-2 3-3-2-2-3 3zM7 15V9H1l2 2-3 3 2 2 3-3z" />
              </svg>
            </WindowButton>
            <WindowButton aria-label="Fechar">
              <svg width="16" height="16" viewBox="0 0 16 16"><path d="M2 2l12 12M14 2L2 14" stroke="currentColor" strokeWidth="2" /></svg>
            </WindowButton>
          </WindowButtons>
        </TitleBar>
      </TitleBackdrop>

      <MenuBar aria-label="Menu principal">
        {menus.map(([a, key, b]) => (
          <MenuLink key={a + key + b} href="#">{a}<u>{key}</u>{b}</MenuLink>
        ))}
        <CloseDocument aria-label="Fechar documento">
          <svg width="9" height="9" viewBox="0 0 9 9"><path d="M1 1l7 7M8 1L1 8" stroke="#3f4346" strokeWidth="2.400" /></svg>
        </CloseDocument>
      </MenuBar>

      <Toolbar role="toolbar" aria-label="Padrão">
        <Grip />
        <Tools groups={standardTools} />
      </Toolbar>

      <Toolbar role="toolbar" aria-label="Formatação" $tall>
        <Grip $wide />
        <Combo>
          <ComboInput aria-label="Estilo de parágrafo" defaultValue="Estilo padrão" />
          <ComboButton aria-label="Abrir estilos"><Chevron /></ComboButton>
        </Combo>
        <ComboSeparator />
        <Combo>
          <ComboInput aria-label="Nome da fonte" defaultValue="Liberation Serif" />
          <ComboButton aria-label="Abrir fontes"><Chevron /></ComboButton>
        </Combo>
        <ComboSeparator />
        <Combo>
          <ComboInput $small aria-label="Tamanho da fonte" defaultValue="12" />
          <ComboButton $small aria-label="Abrir tamanhos"><Chevron /></ComboButton>
        </Combo>
        <Separator />
        <Tools groups={formattingTools} />
      </Toolbar>

      <Workspace>
        <DocumentArea>
          <RulerRow>
            <TabSelector aria-label="Tabulação à esquerda" />
            <Ruler />
          </RulerRow>
          <Page aria-label="Página 1">
            <MarginCorner $side="left" />
            <MarginCorner $side="right" />
          </Page>
        </DocumentArea>
        <ScrollTrack>
          <ScrollThumb />
        </ScrollTrack>
        <Splitter>
          <svg width="3" height="34" viewBox="0 0 3 34" fill="#666" aria-hidden="true">
            <path d="M0 0l3 1.500L0 3zM0 31l3 1.500L0 34z" />
            {[8, 12, 16, 20, 24].map((y) => <rect key={y} x="0" y={y} width="2" height="1" />)}
          </svg>
        </Splitter>
        <Sidebar aria-label="Barra lateral">
          <SidebarMenu aria-label="Configurações da barra lateral">
            <svg width="16" height="16" viewBox="0 0 16 16">
              <path d="M4 4.500h6M4 6.500h6M4 8.500h6" stroke="#2c3850" />
              <path d="M8 10h5v1l-2 2h-1L8 11z" fill="#14203a" />
            </svg>
          </SidebarMenu>
          <SidebarRule />
          <SidebarButton $pressed aria-label="Propriedades"><WrenchIcon /></SidebarButton>
          <SidebarButton aria-label="Estilos"><StylesIcon /></SidebarButton>
          <SidebarButton aria-label="Galeria"><GalleryIcon /></SidebarButton>
          <SidebarButton aria-label="Navegador"><CompassIcon /></SidebarButton>
        </Sidebar>
      </Workspace>

      <StatusBar>
        <FirstStatusCell>Página 1 de 1</FirstStatusCell>
        <StatusCell>0 palavras, 0 caracteres</StatusCell>
        <StatusCell>Estilo padrão</StatusCell>
        <StatusCell $center>Português (Brasil)</StatusCell>
        <StatusCell />
        <StatusCell $center>
          <svg width="12" height="10" viewBox="0 0 12 10"><path d="M0 2h8v6H0z" fill="#8a8a8a" /><path d="M9 .5h3M9 9.500h3M10.500 1v8" stroke="#8a8a8a" /></svg>
        </StatusCell>
        <StatusCell $center>
          <svg width="12" height="12" viewBox="0 0 12 12" fill="none" stroke="#8a8a8a"><path d="M9.500 4V.5h-8v10h8V8" /><path d="M4 6l2 2 5-5" /></svg>
        </StatusCell>
        <StatusCell />
        <StatusCell />
        <StatusCell $center>
          <IconButton aria-label="Uma página">
            <svg width="9" height="11" viewBox="0 0 9 11" fill="#fff" stroke="#444"><path d={docPath} /></svg>
          </IconButton>
          <IconButton aria-label="Várias páginas">
            <svg width="18" height="11" viewBox="0 0 18 11" fill="none" stroke="#8a8a8a"><path d={docPath} /><path transform="translate(9.500 0)" d="M0 .5h5l3 3v7H0zM5 .5v3h3" /></svg>
          </IconButton>
          <IconButton aria-label="Modo livro">
            <svg width="17" height="11" viewBox="0 0 17 11" fill="none" stroke="#8a8a8a"><path d="M8.500.500h-5l-3 3v7h8zM8.500.500h5l3 3v7h-8zM3.500.500v3h-3M13.500.500v3h3" /></svg>
          </IconButton>
        </StatusCell>
        <StatusCell $center>
          <IconButton aria-label="Reduzir">
            <svg width="9" height="9" viewBox="0 0 9 9"><path d="M0 4.500h8" stroke="#888" strokeWidth="1.500" /></svg>
          </IconButton>
          <ZoomSlider type="range" aria-label="Zoom" defaultValue={50} />
          <IconButton aria-label="Ampliar">
            <svg width="9" height="9" viewBox="0 0 9 9"><path d="M0 4.500h9M4.500 0v9" stroke="#888" strokeWidth="1.500" /></svg>
          </IconButton>
        </StatusCell>
        <StatusCell $last>NaN</StatusCell>
      </StatusBar>

      <Taskbar>
        <Launchers>
          <IconButton aria-label="Menu">
            <svg width="24" height="12" viewBox="0 0 24 12" fill="none" stroke="#8d8d8d" strokeWidth="1.500">
              <path d="M18 1L9 8C6 10 1 9 1 6s5-4 8-2l10 6M12 6c3-3 11-4 12-1s-7 4-12 1" />
            </svg>
          </IconButton>
          <PanelRule />
          <IconButton aria-label="Navegador web">
            <svg width="23" height="23" viewBox="0 0 23 23">
              <defs><Grad id="orb" a="#ffb400" b="#ff5a00" /></defs>
              <circle cx="11.500" cy="11.500" r="11" fill="url(#orb)" />
            </svg>
          </IconButton>
          <IconButton aria-label="Arquivos">
            <svg width="25" height="22" viewBox="0 0 25 22">
              <defs><Grad id="fold" a="#dc9a48" b="#8d5b20" /></defs>
              <path d="M1 0h22v22H1z" fill="#a8682a" />
              <path d="M1 4h9l3 3h9v15H1z" fill="url(#fold)" />
              <path d="M10 4q7-2 12 0v16h-1V7h-8z" fill="#efe9dd" />
              <path d="M1 5h9l3 2h4v2H1z" fill="#edb05a" />
              <path d="M17 6v3" stroke="#777" />
            </svg>
          </IconButton>
          <IconButton aria-label="Visualizador de imagens">
            <svg width="24" height="22" viewBox="0 0 24 22">
              <path d="M1 3l13-3 3 13-12 4z" fill="#f0efe8" />
              <path d="M3 5l9-2 2 8-9 3z" fill="#8bbb5c" />
              <circle cx="9" cy="7" r="2" fill="#e8d24a" />
              <path d="M17 16l4 4" stroke="#d8962c" strokeWidth="3" strokeLinecap="round" />
              <circle cx="13" cy="11" r="5.500" fill="#a9c0d6" fillOpacity=".85" stroke="#7e8a96" strokeWidth="1.500" />
            </svg>
          </IconButton>
          <IconButton aria-label="LibreOffice Writer">
            <svg width="22" height="22" viewBox="0 0 22 22">
              <defs><Grad id="wr" a="#2d5ccc" b="#0b2a5c" /></defs>
              <path d="M.5.500h17l4 4v17H.500z" fill="url(#wr)" stroke="#b9c6dc" />
              <path d="M17.500 0H22v4.500z" fill="#fff" />
              <rect x="4" y="5" width="14" height="12" fill="#f2f2f2" />
              <rect x="6.500" y="7.500" width="9" height="7" fill="#fff" stroke="#2f5ba8" />
              <path d="M8 9.500h1M10 9.500h4" stroke="#2f5ba8" />
              <circle cx="11" cy="27" r="4" fill="#ddd" />
            </svg>
          </IconButton>
        </Launchers>
        <Tray>
          <Clock>12:31</Clock>
          <IconButton aria-label="Volume">
            <svg width="17" height="16" viewBox="0 0 17 16">
              <path d="M0 5h3l4-4v14l-4-4H0z" fill="#cfcfcf" />
              <path d="M9 5q2 3 0 6M11 3q3.500 5 0 10" fill="none" stroke="#cfcfcf" strokeWidth="1.500" />
              <path d="M13 1q5 7 0 14" fill="none" stroke="#666" strokeWidth="1.500" />
            </svg>
          </IconButton>
          <IconButton aria-label="Rede sem fio">
            <svg width="18" height="16" viewBox="0 0 18 16" fill="none" stroke="#cfcfcf" strokeWidth="2">
              <path d="M2 5.500q7-6 14 0M4 8.500q5-4 10 0M6 11.500q3-2 6 0" />
              <circle cx="9" cy="14" r="1" fill="#cfcfcf" />
            </svg>
          </IconButton>
          <IconButton aria-label="Bateria">
            <svg width="18" height="18" viewBox="0 0 18 18">
              <path d="M14 9V4q0-1-1-1h-2V1H6v2H4q-1 0-1 1v12q0 1 1 1h6" fill="none" stroke="#cfcfcf" strokeWidth="2" />
              <path d="M5.500 6.500h6M5.500 9.500h6M5.500 12.500h4" stroke="#cfcfcf" strokeWidth="1.500" />
              <path d="M14 9l-4 5h3l-1 4 5-5h-3l2-4z" fill="#cfcfcf" />
            </svg>
          </IconButton>
          <IconButton aria-label="Facebook">
            <svg width="21" height="21" viewBox="0 0 21 21">
              <circle cx="10.500" cy="10.500" r="10.500" fill="#3f5d9f" />
              <path d="M11 19v-6H8.500v-2.500H11V8q0-3.500 3.500-3.500H16V7h-1.200Q13.500 7 13.500 8.300v2.200H16l-.4 2.500h-2.100v6z" fill="#e8ecf4" />
            </svg>
          </IconButton>
          <svg width="13" height="16" viewBox="0 0 13 16" fill="none" aria-hidden="true">
            <g transform="translate(-1 7)">
              <circle cx="13" cy="10" r="12" stroke="#777" />
              <circle cx="13" cy="10" r="8" stroke="#999" />
              <circle cx="13" cy="10" r="4" fill="#bbb" />
            </g>
          </svg>
        </Tray>
      </Taskbar>
    </Shell>
  );
}
